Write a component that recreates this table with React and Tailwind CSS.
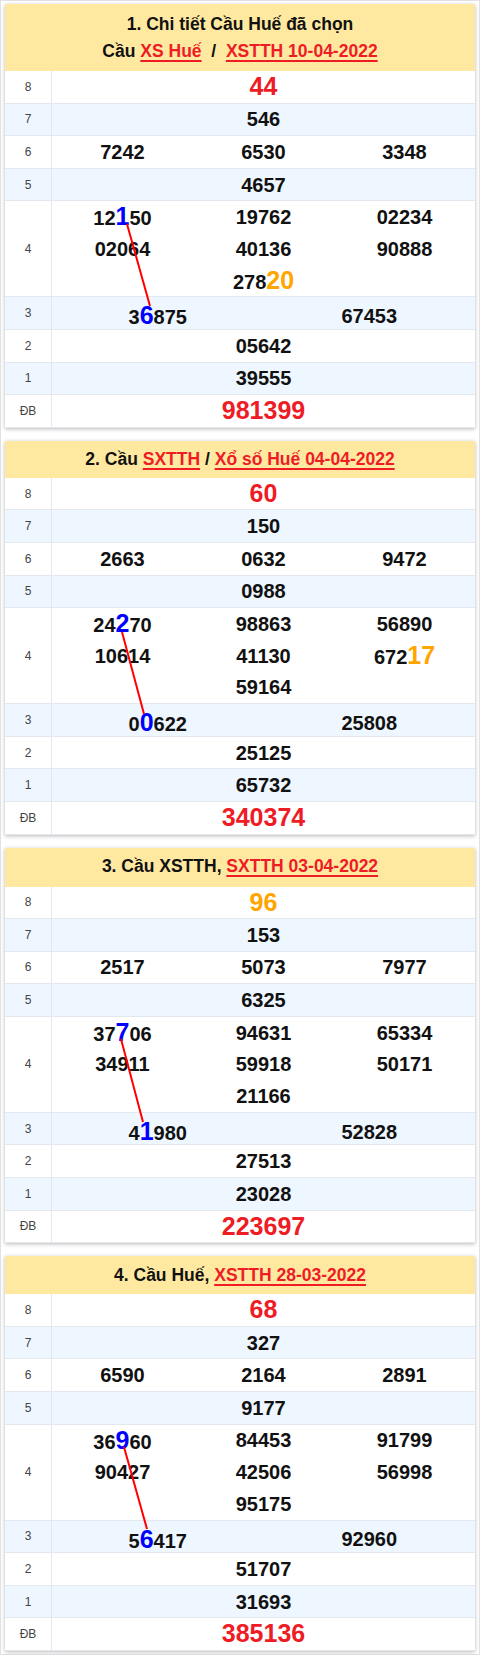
import React from "react";

const cards = [
  {
    header: (
      <div className="flex h-[67px] flex-col items-center justify-center gap-[9px] pt-[1px]">
        <div className="leading-none">1. Chi tiết Cầu Huế đã chọn</div>
        <div className="leading-none">
          Cầu <L>XS Huế</L>&nbsp; / &nbsp;<L>XSTTH 10-04-2022</L>
        </div>
      </div>
    ),
    g8: { v: "44", c: "red" },
    g7: "546",
    g6: ["7242", "6530", "3348"],
    g5: "4657",
    g4: ["12[1]50", "19762", "02234", "02064", "40136", "90888", "278{20}"],
    g3: ["3[6]875", "67453"],
    g2: "05642",
    g1: "39555",
    db: "981399",
    line: [122, 153, 145, 235],
  },
  {
    header: (
      <div className="flex h-[37px] items-center justify-center">
        <div className="leading-none">
          2. Cầu <L>SXTTH</L> / <L>Xổ số Huế 04-04-2022</L>
        </div>
      </div>
    ),
    g8: { v: "60", c: "red" },
    g7: "150",
    g6: ["2663", "0632", "9472"],
    g5: "0988",
    g4: ["24[2]70", "98863", "56890", "10614", "41130", "672{17}", "59164"],
    g3: ["0[0]622", "25808"],
    g2: "25125",
    g1: "65732",
    db: "340374",
    line: [117, 154, 139, 236],
  },
  {
    header: (
      <div className="flex h-[39px] items-center justify-center">
        <div className="leading-none">
          3. Cầu XSTTH, <L>SXTTH 03-04-2022</L>
        </div>
      </div>
    ),
    g8: { v: "96", c: "orange" },
    g7: "153",
    g6: ["2517", "5073", "7977"],
    g5: "6325",
    g4: ["37[7]06", "94631", "65334", "34911", "59918", "50171", "21166"],
    g3: ["4[1]980", "52828"],
    g2: "27513",
    g1: "23028",
    db: "223697",
    line: [116, 152, 138, 235],
  },
  {
    header: (
      <div className="flex h-[38px] items-center justify-center">
        <div className="leading-none">
          4. Cầu Huế, <L>XSTTH 28-03-2022</L>
        </div>
      </div>
    ),
    g8: { v: "68", c: "red" },
    g7: "327",
    g6: ["6590", "2164", "2891"],
    g5: "9177",
    g4: ["36[9]60", "84453", "91799", "90427", "42506", "56998", "95175"],
    g3: ["5[6]417", "92960"],
    g2: "51707",
    g1: "31693",
    db: "385136",
    line: [119, 153, 142, 235],
  },
];

function L({ children }) {
  return (
    <span className="text-[#ee1c25] underline decoration-[#ee1c25] decoration-[1.5px] underline-offset-[3px]">
      {children}
    </span>
  );
}

function Num({ s }) {
  const parts = [];
  const re = /(\[[^\]]+\]|\{[^}]+\})/g;
  let last = 0;
  let m;
  let k = 0;
  while ((m = re.exec(s))) {
    if (m.index > last) parts.push(<span key={k++}>{s.slice(last, m.index)}</span>);
    const t = m[0];
    if (t[0] === "[")
      parts.push(
        <span key={k++} className="text-[25px] text-[#0000ff]">
          {t.slice(1, -1)}
        </span>
      );
    else
      parts.push(
        <span key={k++} className="text-[25px] text-[#ffa500]">
          {t.slice(1, -1)}
        </span>
      );
    last = m.index + t.length;
  }
  if (last < s.length) parts.push(<span key={k++}>{s.slice(last)}</span>);
  return <span className="text-[20px] font-bold text-[#111]">{parts}</span>;
}

function Row({ label, blue, tall, children }) {
  return (
    <div
      className={
        (tall ? "h-[96px] " : "h-[32.6px] ") +
        (blue ? "bg-[#eef6ff] " : "bg-white ") +
        "flex border-b border-[#e3e8ee] last:border-b-0"
      }
    >
      <div className="flex w-[47px] shrink-0 items-center justify-center border-r border-[#e3e8ee] text-[12px] text-[#444]">
        {label}
      </div>
      <div className="flex-1">{children}</div>
    </div>
  );
}

function Center({ children }) {
  return <div className="flex h-full items-center justify-center">{children}</div>;
}

function Big({ v, c }) {
  return (
    <span
      className={
        "text-[25px] font-bold " + (c === "orange" ? "text-[#ffa500]" : "text-[#ee1c25]")
      }
    >
      {v}
    </span>
  );
}

function Card({ d }) {
  return (
    <div className="bg-white shadow-[0_1px_4px_rgba(0,0,0,0.28)]">
      <div className="bg-[#ffe9a1] text-[17.5px] font-bold text-[#111]">{d.header}</div>
      <div className="relative">
        <Row label="8">
          <Center>
            <Big v={d.g8.v} c={d.g8.c} />
          </Center>
        </Row>
        <Row label="7" blue>
          <Center>
            <Num s={d.g7} />
          </Center>
        </Row>
        <Row label="6">
          <div className="grid h-full grid-cols-3">
            {d.g6.map((x) => (
              <Center key={x}>
                <Num s={x} />
              </Center>
            ))}
          </div>
        </Row>
        <Row label="5" blue>
          <Center>
            <Num s={d.g5} />
          </Center>
        </Row>
        <Row label="4" tall>
          <div className="grid h-full grid-cols-3 grid-rows-3">
            {d.g4.map((x, i) => (
              <div
                key={i}
                className={
                  "flex items-center justify-center " + (i === 6 ? "col-start-2" : "")
                }
              >
                <Num s={x} />
              </div>
            ))}
          </div>
        </Row>
        <Row label="3" blue>
          <div className="grid h-full grid-cols-2">
            {d.g3.map((x) => (
              <Center key={x}>
                <Num s={x} />
              </Center>
            ))}
          </div>
        </Row>
        <Row label="2">
          <Center>
            <Num s={d.g2} />
          </Center>
        </Row>
        <Row label="1" blue>
          <Center>
            <Num s={d.g1} />
          </Center>
        </Row>
        <Row label="ĐB">
          <Center>
            <Big v={d.db} c="red" />
          </Center>
        </Row>
        <svg
          className="pointer-events-none absolute left-0 top-0"
          width="470"
          height="357"
          viewBox="0 0 470 357"
        >
          <line
            x1={d.line[0]}
            y1={d.line[1]}
            x2={d.line[2]}
            y2={d.line[3]}
            stroke="#ff0000"
            strokeWidth="2"
          />
        </svg>
      </div>
    </div>
  );
}

export default function App() {
  return (
    <div className="w-[480px] bg-white font-['Liberation_Sans',Arial,sans-serif]">
      <div className="flex flex-col gap-[13px] border border-[#e2e2e2] px-[4px] pb-[3px] pt-[3px]">
        {cards.map((d, i) => (
          <Card key={i} d={d} />
        ))}
      </div>
    </div>
  );
}
